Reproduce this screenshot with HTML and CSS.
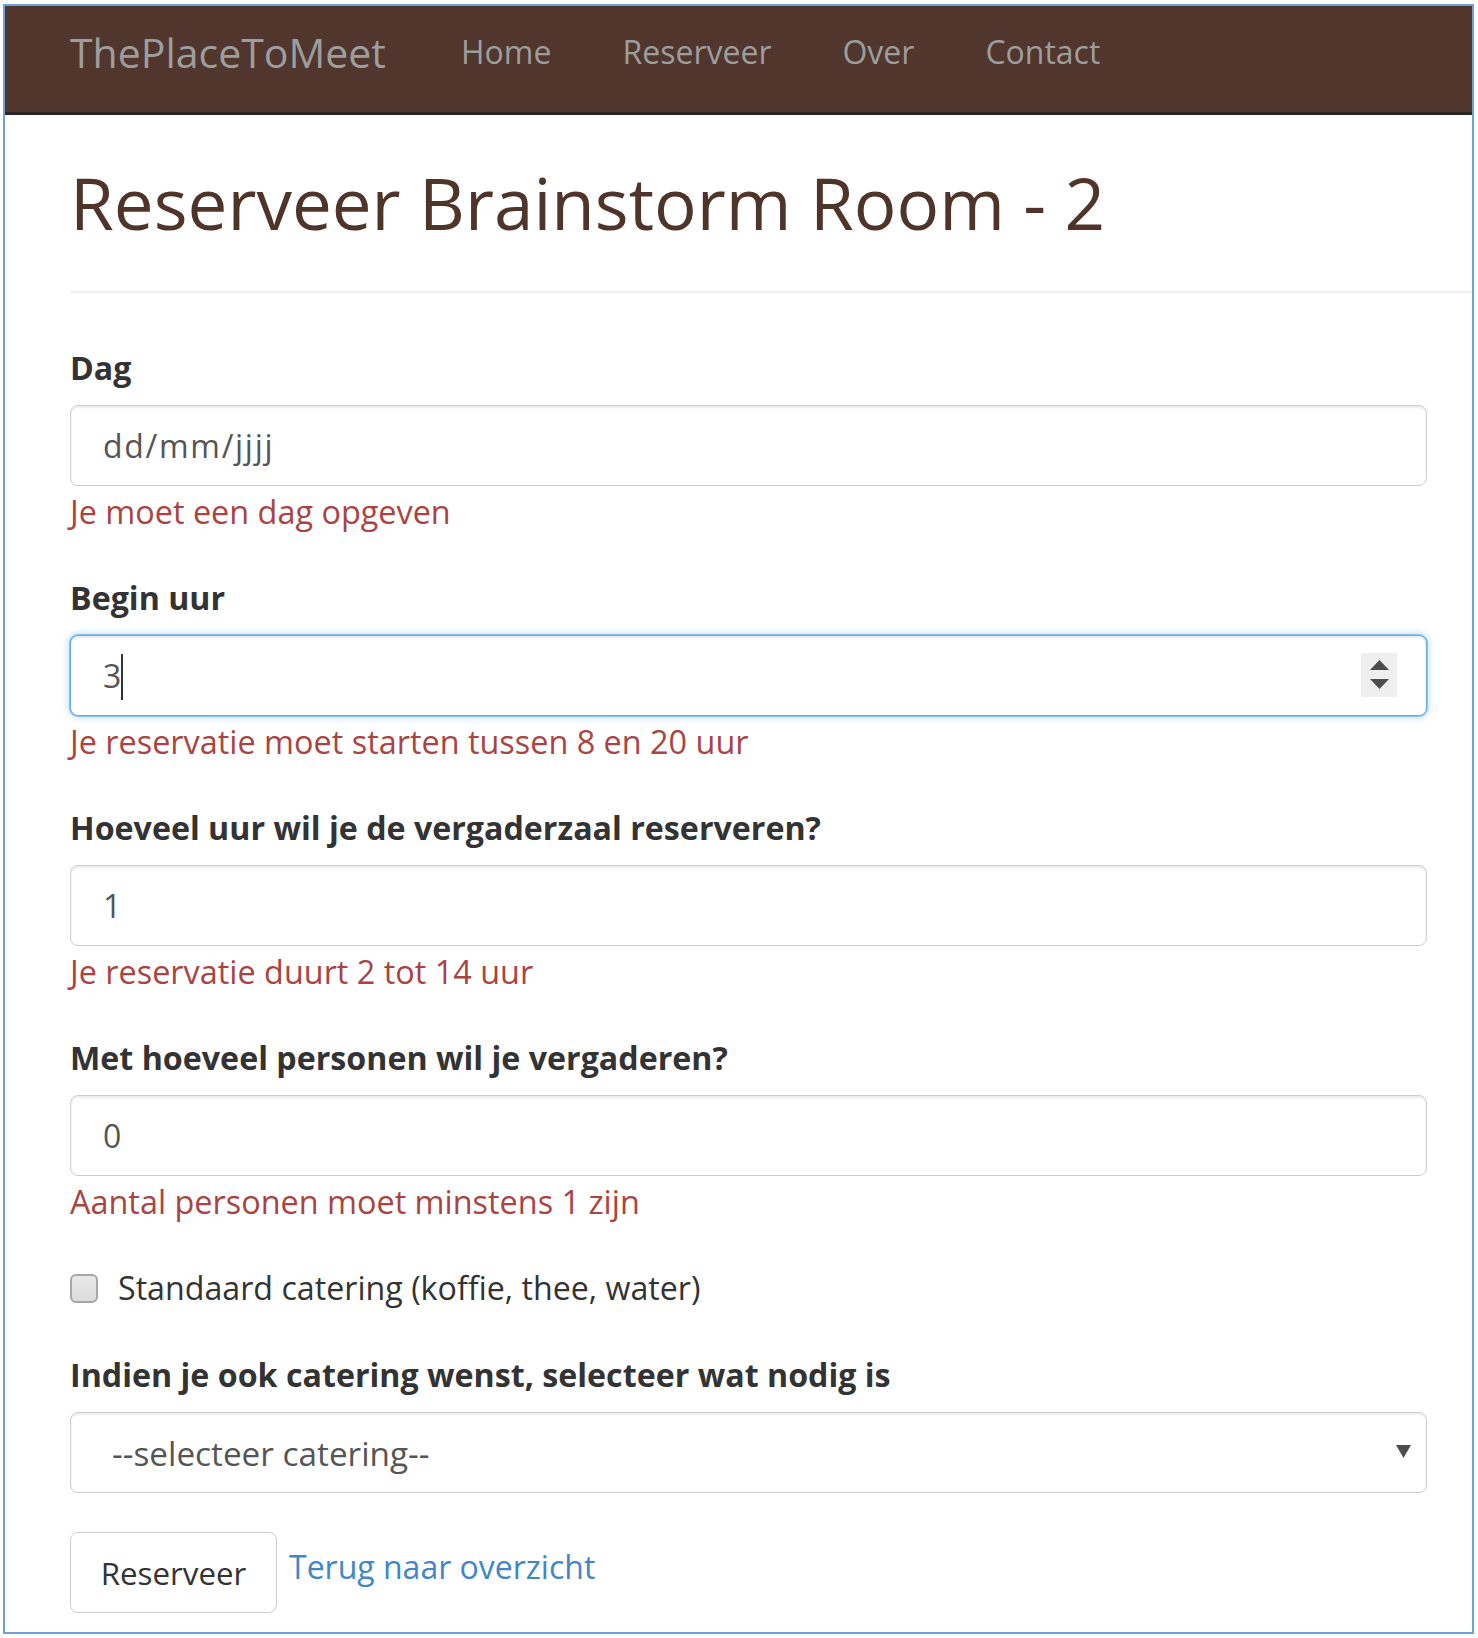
FILE: index.html
```html
<!DOCTYPE html>
<html lang="nl">
<head>
<meta charset="utf-8">
<title>Reserveer Brainstorm Room - 2</title>
<link rel="stylesheet" href="styles.css">
</head>
<body>
<div class="frame">
  <nav class="navbar">
    <a class="brand" href="#">ThePlaceToMeet</a>
    <ul class="nav">
      <li><a href="#">Home</a></li>
      <li><a href="#">Reserveer</a></li>
      <li><a href="#">Over</a></li>
      <li><a href="#">Contact</a></li>
    </ul>
  </nav>
  <main class="page">
    <h1 class="title">Reserveer Brainstorm Room - 2</h1>
    <hr class="rule">
    <form class="form">
      <div class="group">
        <label class="label" for="dag">Dag</label>
        <input class="control control-date" id="dag" type="text" value="dd/mm/jjjj">
        <div class="error">Je moet een dag opgeven</div>
      </div>
      <div class="group">
        <label class="label" for="begin">Begin uur</label>
        <div class="field">
          <input class="control control-focus" id="begin" type="text" value="3">
          <span class="caret"></span>
          <span class="spinner">
            <svg width="19" height="30" viewBox="0 0 19 30"><path d="M9.5 0 L19 10 H0 Z" fill="#4d4d4d"/><path d="M0 19 H19 L9.5 29 Z" fill="#4d4d4d"/></svg>
          </span>
        </div>
        <div class="error">Je reservatie moet starten tussen 8 en 20 uur</div>
      </div>
      <div class="group">
        <label class="label" for="duur">Hoeveel uur wil je de vergaderzaal reserveren?</label>
        <input class="control" id="duur" type="text" value="1">
        <div class="error">Je reservatie duurt 2 tot 14 uur</div>
      </div>
      <div class="group">
        <label class="label" for="personen">Met hoeveel personen wil je vergaderen?</label>
        <input class="control" id="personen" type="text" value="0">
        <div class="error">Aantal personen moet minstens 1 zijn</div>
      </div>
      <div class="check">
        <span class="checkbox"></span>
        <span class="check-label">Standaard catering (koffie, thee, water)</span>
      </div>
      <label class="label" for="catering">Indien je ook catering wenst, selecteer wat nodig is</label>
      <div class="field">
        <select class="control select" id="catering">
          <option>--selecteer catering--</option>
        </select>
        <span class="select-arrow">
          <svg width="15" height="13" viewBox="0 0 15 13"><path d="M0 0 H15 L7.5 13 Z" fill="#4d4d4d"/></svg>
        </span>
      </div>
      <div class="actions">
        <button class="btn" type="button">Reserveer</button>
        <a class="back" href="#">Terug naar overzicht</a>
      </div>
    </form>
  </main>
</div>
</body>
</html>
```

FILE: styles.css
```css
* { box-sizing: border-box; }

html, body {
  margin: 0;
  padding: 0;
  background: #ffffff;
}

body {
  font-family: "Open Sans", "Noto Sans", Arial, sans-serif;
  color: #333333;
}

.frame {
  margin: 4px 0 0 3px;
  width: 1471px;
  height: 1630px;
  border: 2px solid #6f9fdc;
  overflow: hidden;
  background: #ffffff;
}

.navbar {
  display: flex;
  align-items: center;
  height: 109px;
  padding: 0 0 14px 65px;
  background: #50362d;
  border-bottom: 3px solid #2c2522;
}

.brand {
  font-size: 41px;
  line-height: 41px;
  color: #9d9d9d;
  text-decoration: none;
  margin-right: 75px;
}

.nav {
  display: flex;
  gap: 71px;
  margin: 0;
  padding: 0;
  list-style: none;
}

.nav a {
  font-size: 32px;
  line-height: 32px;
  color: #9d9d9d;
  text-decoration: none;
}

.page {
  padding-left: 65px;
}

.title {
  margin: 49px 0 0;
  font-size: 71px;
  line-height: 78px;
  font-weight: 500;
  color: #4f3429;
}

.rule {
  margin: 49px 0 0;
  border: 0;
  border-top: 2px solid #eeeeee;
}

.form {
  padding: 55px 45px 0 0;
}

.group {
  margin-bottom: 47px;
}

.label {
  display: block;
  margin-bottom: 17px;
  font-size: 32.2px;
  line-height: 40px;
  font-weight: 700;
  color: #333333;
}

.field {
  position: relative;
}

.control {
  display: block;
  width: 100%;
  height: 81px;
  margin: 0;
  padding: 0 0 0 32px;
  font-family: inherit;
  font-size: 32px;
  color: #555555;
  background: #ffffff;
  border: 1px solid #cccccc;
  border-radius: 8px;
  box-shadow: inset 0 2px 2px rgba(0, 0, 0, 0.075);
  outline: none;
}

.control-date {
  letter-spacing: 1.7px;
}

.control-focus {
  border-color: #66afe9;
  box-shadow: inset 0 2px 2px rgba(0, 0, 0, 0.075), 0 0 0 1px rgba(102, 175, 233, 0.7), 0 0 8px rgba(102, 175, 233, 0.6);
}

.caret {
  position: absolute;
  left: 51px;
  top: 19px;
  width: 2px;
  height: 46px;
  background: #333333;
}

.spinner {
  position: absolute;
  right: 30px;
  top: 18px;
  width: 36px;
  height: 44px;
  display: flex;
  align-items: center;
  justify-content: center;
  background: #efefef;
}

.error {
  margin-top: 5px;
  font-size: 32.4px;
  line-height: 40px;
  color: #a94442;
}

.check {
  display: flex;
  align-items: center;
  gap: 20px;
  height: 40px;
  margin-bottom: 47px;
}

.checkbox {
  width: 28px;
  height: 29px;
  border: 2px solid #a6a6a6;
  border-radius: 6px;
  background: linear-gradient(#e9e9e9, #dcdcdc);
}

.check-label {
  font-size: 32.2px;
  line-height: 40px;
  color: #333333;
}

.select {
  appearance: none;
  -webkit-appearance: none;
  padding-left: 41px;
  font-size: 33.3px;
  box-shadow: inset 0 2px 2px rgba(0, 0, 0, 0.075);
}

.select-arrow {
  position: absolute;
  right: 16px;
  top: 33px;
  display: flex;
}

.actions {
  display: flex;
  align-items: flex-start;
  margin-top: 39px;
}

.btn {
  width: 207px;
  height: 81px;
  padding: 0;
  font-family: inherit;
  font-size: 31.3px;
  color: #333333;
  background: #ffffff;
  border: 1px solid #cccccc;
  border-radius: 8px;
}

.back {
  margin: 15px 0 0 12px;
  font-size: 32px;
  line-height: 40px;
  color: #4286c8;
  text-decoration: none;
}
```
